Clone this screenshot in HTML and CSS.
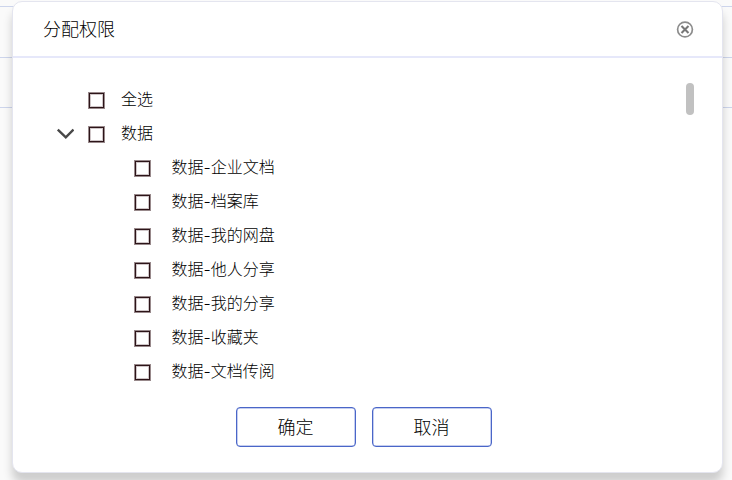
FILE: index.html
```html
<!DOCTYPE html>
<html lang="zh-CN">
<head>
    <meta charset="UTF-8">
    <title>分配权限</title>
    <link rel="stylesheet" href="styles.css">
</head>
<body>
    <div class="table-bg">
        <div class="line first"></div>
        <div class="line"></div>
        <div class="line"></div>
    </div>

    <div class="dialog">
        <div class="dialog-header">
            <span class="title">分配权限</span>
            <svg class="close" width="18" height="18" viewBox="0 0 18 18">
                <circle cx="9" cy="9.5" r="7.4"></circle>
                <path class="cross" d="M5.5 6l7 7M12.5 6l-7 7"></path>
            </svg>
        </div>
        <div class="dialog-body">
            <ul class="tree">
                <li><i class="arrow"></i><i class="box"></i><span>全选</span></li>
                <li>
                    <svg class="arrow" width="18" height="12" viewBox="0 0 18 12">
                        <path d="M1.8 1.6L9.8 9.4l7.7-7.8"></path>
                    </svg>
                    <i class="box"></i><span>数据</span>
                </li>
                <li class="child"><i class="box"></i><span>数据-企业文档</span></li>
                <li class="child"><i class="box"></i><span>数据-档案库</span></li>
                <li class="child"><i class="box"></i><span>数据-我的网盘</span></li>
                <li class="child"><i class="box"></i><span>数据-他人分享</span></li>
                <li class="child"><i class="box"></i><span>数据-我的分享</span></li>
                <li class="child"><i class="box"></i><span>数据-收藏夹</span></li>
                <li class="child"><i class="box"></i><span>数据-文档传阅</span></li>
            </ul>
            <div class="scrollbar"></div>
        </div>
        <div class="dialog-footer">
            <button type="button">确定</button>
            <button type="button">取消</button>
        </div>
    </div>
</body>
</html>
```

FILE: styles.css
```css
* {
    box-sizing: border-box;
}

body {
    margin: 0;
    height: 480px;
    overflow: hidden;
    position: relative;
    background-color: #fafafa;
    color: #000;
    font-family: Inter, "Noto Sans CJK SC", sans-serif;
    font-weight: 300;
}

/* table rows behind the dialog */
.line {
    height: 50px;
    border-bottom: 1px solid #cdd5ec;
}

.line.first {
    height: 7px;
}

.line:nth-child(2) {
    height: 51px;
}

.dialog {
    position: absolute;
    left: 12px;
    top: 1px;
    width: 711px;
    height: 472px;
    display: flex;
    flex-direction: column;
    background-color: #fff;
    border: 1px solid #e4e5ef;
    border-radius: 10px;
    box-shadow: 0 10px 10px rgba(0, 0, 0, 0.18);
}

.dialog-header {
    display: flex;
    align-items: center;
    justify-content: space-between;
    height: 56px;
    padding: 0 28px 0 30px;
    border-bottom: 2px solid #e6e8fa;
    font-size: 18px;
}

.title {
    padding-bottom: 2px;
}

.close {
    fill: none;
    stroke: #8c8c8c;
    stroke-width: 1.7;
}

.close .cross {
    stroke: #777;
    stroke-width: 2.1;
}

.dialog-body {
    display: flex;
    justify-content: space-between;
    height: 332px;
    padding: 25px 28px 0 43px;
}

.tree {
    margin: 0;
    padding: 0;
    list-style: none;
    font-size: 16px;
}

.tree li {
    display: flex;
    align-items: center;
    height: 34px;
}

.tree li span {
    padding-bottom: 4px;
}

.tree li.child {
    padding-left: 78px;
}

.tree .arrow {
    width: 18px;
    margin-right: 14px;
    fill: none;
    stroke: #484848;
    stroke-width: 2.4;
}

.box {
    width: 17px;
    height: 17px;
    margin-right: 16px;
    border: 1px solid #98898b;
    box-shadow: inset 0 0 0 1px #2c1418, inset 0 0 0 2px #cfc6c8;
}

.child .box {
    margin-right: 20.5px;
}

.scrollbar {
    width: 8px;
    height: 32px;
    border-radius: 4px;
    background-color: #c1c1c1;
}

.dialog-footer {
    display: flex;
    justify-content: center;
    gap: 16px;
    padding: 17px 8px 0 0;
}

button {
    width: 120px;
    height: 40px;
    padding: 0 0 2px;
    background-color: #fff;
    border: 1px solid #4a66c8;
    border-radius: 4px;
    box-shadow: inset 0 0 0 0.5px #8b9de0;
    color: #000;
    font-family: inherit;
    font-size: 18px;
    font-weight: 300;
}
```
